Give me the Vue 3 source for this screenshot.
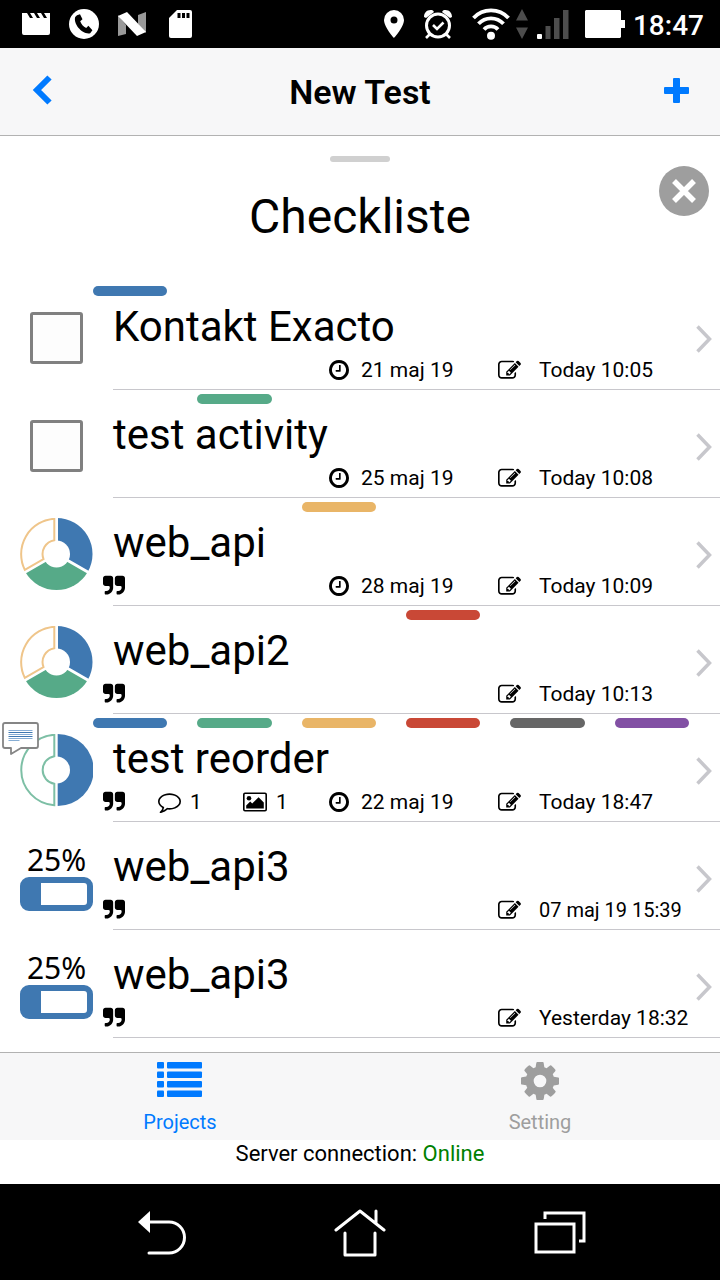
<script setup>
import { ref } from 'vue'

const palette = ['#3f78b1', '#56aa88', '#e9b567', '#c94836', '#666666', '#8250a4']

const items = ref([
  { id: 1, title: 'Kontakt Exacto', status: 'check', tags: [0], due: '21 maj 19', edited: 'Today 10:05' },
  { id: 2, title: 'test activity', status: 'check', tags: [1], due: '25 maj 19', edited: 'Today 10:08' },
  { id: 3, title: 'web_api', status: 'thirds', tags: [2], note: true, due: '28 maj 19', edited: 'Today 10:09' },
  { id: 4, title: 'web_api2', status: 'thirds', tags: [3], note: true, edited: 'Today 10:13' },
  { id: 5, title: 'test reorder', status: 'halves', tags: [0, 1, 2, 3, 4, 5], note: true, comments: 1, images: 1, due: '22 maj 19', edited: 'Today 18:47', unread: true },
  { id: 6, title: 'web_api3', status: 'percent', percent: 25, tags: [], note: true, edited: '07 maj 19 15:39', fullDate: true },
  { id: 7, title: 'web_api3', status: 'percent', percent: 25, tags: [], note: true, edited: 'Yesterday 18:32' }
])
</script>

<template>
  <div class="screen">
    <div class="status">
      <div class="status-left">
        <svg width="28" height="24" viewBox="0 0 28 24"><path fill="#fff" d="M0 1h5l3 5h3L8 1h4l3 5h3l-3-5h4l3 5h3l-3-5h6v20a2 2 0 0 1-2 2H2a2 2 0 0 1-2-2z" /></svg>
        <svg width="30" height="30" viewBox="0 0 30 30"><circle cx="15" cy="15" r="15" fill="#fff" /><path fill="#000" d="M8 6.200l3-1 2.500 5-2.300 2c1 3 3 5.200 6 6.700l2.200-2.100 4 4.500-2.200 3C13.500 26 4 15 6.200 8z" /></svg>
        <svg width="28" height="24" viewBox="0 0 28 24"><path fill="#999" d="M0 3l8 10v9l-8 2zM28 0v21l-8-9V3z" /><path fill="#fff" d="M0 4l9-4 19 20-9 4z" /></svg>
        <svg class="sdcard" width="23" height="28" viewBox="0 0 23 28"><path fill="#fff" d="M8 0h13a2 2 0 0 1 2 2v24a2 2 0 0 1-2 2H2a2 2 0 0 1-2-2V8z" /><path d="M8.500 3h3v5h-3zM13 3h3v5h-3zM17.500 3h3v5h-3z" /></svg>
      </div>
      <div class="status-right">
        <svg class="pin" width="20" height="28" viewBox="0 0 20 28"><path fill="#fff" fill-rule="evenodd" d="M10 0a10 10 0 0 1 10 10c0 7-10 18-10 18S0 17 0 10A10 10 0 0 1 10 0zm0 6.500a3.500 3.500 0 1 0 0 7 3.500 3.500 0 0 0 0-7z" /></svg>
        <svg class="alarm" width="28" height="30" viewBox="0 0 28 30" fill="none" stroke="#fff"><circle cx="14" cy="16.500" r="11.500" stroke-width="3" /><path stroke-width="2.600" d="M9 16l4 4 6.500-6.500M6 25l-4 4M22 25l4 4" /><path fill="#fff" stroke="none" d="M0 8C0 3 4 0 9 1.500L10 3 2 9zM28 8c0-5-4-8-9-6.500L18 3l8 6z" /></svg>
        <svg class="wifi" width="38" height="32" viewBox="0 0 38 32" fill="none" stroke="#fff" stroke-width="3.800"><path d="M1.500 10a24 24 0 0 1 35 0M6.500 15.800a17 17 0 0 1 25 0M12 21.500a9.500 9.500 0 0 1 14 0" /><circle cx="19" cy="27.800" r="4" fill="#fff" stroke="none" /></svg>
        <svg class="traffic" width="12" height="30" viewBox="0 0 12 30"><path fill="#4d4d4d" d="M6 0l6 11.500H0zM6 30L0 18.500h12z" /></svg>
        <svg class="signal" width="32" height="29" viewBox="0 0 32 29"><rect x="0" y="24" width="5" height="5" rx="1" fill="#fff" /><path fill="#4d4d4d" d="M8.500 16h5v13h-5zM17 8h5.500v21H17zM26 0h5.500v29H26z" /></svg>
        <svg width="40" height="28" viewBox="0 0 40 28"><path fill="#fff" d="M1 0h34l1 1v9h4v8h-4v9l-1 1H1l-1-1V1z" /></svg>
        <time class="clock">18:47</time>
      </div>
    </div>

    <header class="navbar">
      <button class="nav-btn" type="button" aria-label="Back">
        <svg width="22" height="30" viewBox="0 0 22 30" fill="none" stroke="#007aff" stroke-width="6"><path d="M18.500 2.500L6 15 18.500 27.500" stroke-linejoin="miter" /></svg>
      </button>
      <h1 class="nav-title">New Test</h1>
      <button class="nav-btn right" type="button" aria-label="Add">
        <svg width="25" height="25" viewBox="0 0 25 25" fill="#007aff"><rect x="9" width="7" height="25" rx="1" /><rect y="9" width="25" height="7" rx="1" /></svg>
      </button>
    </header>

    <main class="sheet">
      <div class="sheet-head">
        <div class="handle"></div>
        <h2 class="sheet-title">Checkliste</h2>
        <button class="close" type="button" aria-label="Close">
          <svg width="50" height="50" viewBox="0 0 50 50"><circle cx="25" cy="25" r="25" fill="#9e9e9e" /><path d="M15 15l20 20M35 15L15 35" stroke="#fff" stroke-width="5.500" /></svg>
        </button>
      </div>

      <ul class="list">
        <li v-for="item in items" :key="item.id" class="row">
          <div class="tags">
            <span v-for="(color, i) in palette" :key="i" class="tag" :style="{ background: item.tags.includes(i) ? color : 'transparent' }"></span>
          </div>

          <div class="badge">
            <input v-if="item.status === 'check'" class="box" type="checkbox" :aria-label="item.title" />
            <svg v-else-if="item.status === 'thirds'" width="73" height="73" viewBox="-36.500 -36 73 73">
              <path fill="#3f78b1" d="M0-36A36 36 0 0 1 31.200 18L0 0z" />
              <path fill="#56aa88" d="M31.200 18A36 36 0 0 1-31.200 18L0 0z" />
              <path d="M0 0V-37M0 0L33 19M0 0L-33 19" stroke="#fff" stroke-width="3" />
              <circle r="13.500" fill="#fff" />
              <path fill="#fff" stroke="#efc58a" stroke-width="2" d="M-2.200-35.200V-13.800A14 14 0 0 0-13 5L-31.700 15.800A35.400 35.400 0 0 1-2.200-35.200z" />
            </svg>
            <svg v-else-if="item.status === 'halves'" width="73" height="73" viewBox="-36.500 -36 73 73">
              <path fill="#3f78b1" d="M1.200-36A36 36 0 0 1 1.200 36z" />
              <circle r="13.500" fill="#fff" />
              <path fill="#fff" stroke="#7dbfa5" stroke-width="2" d="M-2.200-35.200V-13.800A14 14 0 0 0-2.200 13.800V35.200A35.270 35.270 0 0 1-2.200-35.200z" />
            </svg>
            <div v-else class="percent">
              <span class="percent-text">{{ item.percent }}%</span>
              <span class="gauge"><span class="gauge-fill" :style="{ width: item.percent + '%' }"></span></span>
            </div>
            <svg v-if="item.unread" class="bubble" width="37" height="34" viewBox="0 0 37 34"><path fill="#fff" stroke="#858585" stroke-width="1.800" stroke-linejoin="round" d="M3 1h31q2 0 2 2v21q0 2-2 2H19L9 32v-6H3q-2 0-2-2V3q0-2 2-2z" /><path d="M6.500 8.500h24M6.500 12.500h24M6.500 16.500h24M6.500 18.500h11" stroke="#86add4" stroke-width="1" /><path d="M6.500 10.500h24M6.500 14.500h24" stroke="#3f78b1" stroke-width="1" /></svg>
          </div>

          <a class="title" href="#">{{ item.title }}</a>
          <svg class="chevron" width="16" height="28" viewBox="0 0 16 28" fill="none" stroke="#c7c7cc" stroke-width="3.500"><path d="M1.500 1.500L13.500 14 1.500 26.500" /></svg>

          <div class="meta">
            <span class="cell">
              <svg v-if="item.note" width="22" height="22" viewBox="64 64 1664 1664"><path d="M832 320v704q0 104-40.500 198.500t-109.500 163.500-163.500 109.500-198.500 40.500h-64q-26 0-45-19t-19-45v-128q0-26 19-45t45-19h64q106 0 181-75t75-181v-32q0-40-28-68t-68-28h-224q-80 0-136-56t-56-136v-384q0-80 56-136t136-56h384q80 0 136 56t56 136zm896 0v704q0 104-40.500 198.500t-109.500 163.500-163.500 109.500-198.500 40.500h-64q-26 0-45-19t-19-45v-128q0-26 19-45t45-19h64q106 0 181-75t75-181v-32q0-40-28-68t-68-28h-224q-80 0-136-56t-56-136v-384q0-80 56-136t136-56h384q80 0 136 56t56 136z" /></svg>
            </span>
            <span class="cell">
              <template v-if="item.comments">
                <svg width="23" height="23" viewBox="0 80 1792 1792"><path d="M896 384q-204 0-381.500 69.500t-282 187.500-104.500 255q0 112 71.500 213.500t201.500 175.500l87 50-27 96q-24 91-70 172 152-63 275-171l43-38 57 6q69 8 130 8 204 0 381.500-69.500t282-187.500 104.500-255-104.500-255-282-187.500-381.500-69.500zm896 512q0 174-120 321.500t-326 233-450 85.500q-70 0-145-8-198 175-460 242-49 14-114 22h-5q-15 0-27-10.500t-16-27.500v-1q-3-4-.5-12t2-10 4.500-9.500l6-9 7-8.500 8-9q7-8 31-34.500t34.500-38 31-39.500 32.500-51 27-59 26-76q-157-89-247.500-220t-90.500-281q0-130 71-248.500t191-204.500 286-136.500 348-50.500 348 50.500 286 136.500 191 204.500 71 248.500z" /></svg>
                <span>{{ item.comments }}</span>
              </template>
            </span>
            <span class="cell">
              <template v-if="item.images">
                <svg width="24" height="20" viewBox="0 0 24 20"><rect x=".8" y="1.300" width="22.400" height="17.400" rx="1.200" fill="none" stroke="#000" stroke-width="1.600" /><circle cx="6" cy="6.200" r="2.300" /><path d="M3.200 16.500v-3l4-4 2 2 6.400-6.300 5.200 5.200v6.100z" /></svg>
                <span>{{ item.images }}</span>
              </template>
            </span>
            <span class="cell due">
              <template v-if="item.due">
                <svg width="20" height="20" viewBox="128 128 1536 1536"><path d="M1024 544v448q0 14-9 23t-23 9h-320q-14 0-23-9t-9-23v-64q0-14 9-23t23-9h224v-352q0-14 9-23t23-9h64q14 0 23 9t9 23zm416 352q0-148-73-273t-198-198-273-73-273 73-198 198-73 273 73 273 198 198 273 73 273-73 198-198 73-273zm224 0q0 209-103 385.500t-279.500 279.500-385.500 103-385.500-103-279.500-279.500-103-385.500 103-385.500 279.500-279.500 385.500-103 385.500 103 279.500 279.500 103 385.500z" /></svg>
                <span>{{ item.due }}</span>
              </template>
            </span>
            <span class="cell edited" :class="{ 'full-date': item.fullDate }">
              <svg width="23" height="23" viewBox="0 0 1792 1792"><path d="M888 1184l116-116-152-152-116 116v56h96v96h56zm440-720q-16-16-33 1l-350 350q-17 17-1 33t33-1l350-350q17-17 1-33zm80 594v190q0 119-84.500 203.500t-203.500 84.500h-832q-119 0-203.500-84.500t-84.500-203.500v-832q0-119 84.500-203.500t203.500-84.500h832q63 0 117 25 15 7 18 23 3 17-9 29l-49 49q-14 14-32 8-23-6-45-6h-832q-66 0-113 47t-47 113v832q0 66 47 113t113 47h832q66 0 113-47t47-113v-126q0-13 9-22l64-64q15-15 35-7t20 29zm-96-738l288 288-672 672h-288v-288zm444 132l-92 92-288-288 92-92q28-28 68-28t68 28l152 152q28 28 28 68t-28 68z" /></svg>
              <span>{{ item.edited }}</span>
            </span>
          </div>
          <div class="rule"></div>
        </li>
      </ul>
    </main>

    <nav class="tabbar">
      <a class="tab active" href="#">
        <svg width="46" height="38" viewBox="0 0 46 38" fill="currentColor"><rect y="0" width="7" height="6.500" rx="1" /><rect x="10" y="0" width="35" height="6.500" rx="1" /><rect y="9.500" width="7" height="6.500" rx="1" /><rect x="10" y="9.500" width="35" height="6.500" rx="1" /><rect y="19" width="7" height="6.500" rx="1" /><rect x="10" y="19" width="35" height="6.500" rx="1" /><rect y="28.500" width="7" height="6.500" rx="1" /><rect x="10" y="28.500" width="35" height="6.500" rx="1" /></svg>
        <span>Projects</span>
      </a>
      <a class="tab" href="#">
        <svg width="38" height="38" viewBox="128 128 1536 1536" fill="currentColor"><path d="M1152 896q0-106-75-181t-181-75-181 75-75 181 75 181 181 75 181-75 75-181zm512-109v222q0 12-8 23t-20 13l-185 28q-19 54-39 91 35 50 107 138 10 12 10 25t-9 23q-27 37-99 108t-94 71q-12 0-26-9l-138-108q-44 23-91 38-16 136-29 186-7 28-36 28h-222q-14 0-24.500-8.500t-11.500-21.500l-28-184q-49-16-90-37l-141 107q-10 9-25 9-14 0-25-11-126-114-165-168-7-10-7-23 0-12 8-23 15-21 51-66.500t54-70.500q-27-50-41-99l-183-27q-13-2-21-12.500t-8-23.500v-222q0-12 8-23t19-13l186-28q14-46 39-92-40-57-107-138-10-12-10-24 0-10 9-23 26-36 98.500-107.500t94.500-71.500q13 0 26 10l138 107q44-23 91-38 16-136 29-186 7-28 36-28h222q14 0 24.500 8.500t11.500 21.500l28 184q49 16 90 37l142-107q9-9 24-9 13 0 25 10 129 119 165 170 7 8 7 22 0 12-8 23-15 21-51 66.500t-54 70.500q26 50 41 98l183 28q13 2 21 12.500t8 23.500z" /></svg>
        <span>Setting</span>
      </a>
    </nav>

    <footer class="server">Server connection: <span class="online">Online</span></footer>

    <div class="softkeys">
      <button type="button" aria-label="System back"><svg width="48" height="44" viewBox="0 0 48 44" fill="none" stroke="#fff" stroke-width="3" stroke-linecap="round"><path d="M12 11h19a15.500 15.500 0 0 1 0 31H11" /><path d="M0 11L12 0v22z" fill="#fff" stroke="none" /></svg></button>
      <button type="button" aria-label="Home"><svg width="52" height="48" viewBox="0 0 52 48" fill="none" stroke="#fff" stroke-width="3" stroke-linecap="round" stroke-linejoin="round"><path d="M2 21L26 2l24 19M42 2v12M11 24v22h30V24" /></svg></button>
      <button type="button" aria-label="Recent apps"><svg width="52" height="44" viewBox="0 0 52 44" fill="none" stroke="#fff" stroke-width="3"><rect x="2" y="13" width="38" height="28" /><path d="M11 8V2h39v28h-5" /></svg></button>
    </div>
  </div>
</template>

<style>
body {
  background: #fff;
}
</style>

<style scoped>
.screen {
  display: flex;
  flex-direction: column;
  min-height: 100vh;
  background: #fff;
  color: #000;
  font-family: Roboto, "Liberation Sans", sans-serif;
}
.screen * {
  box-sizing: border-box;
}
svg {
  display: block;
  flex: none;
}
button {
  padding: 0;
  border: 0;
  background: none;
  cursor: pointer;
}
a {
  color: inherit;
  text-decoration: none;
}
.status {
  display: flex;
  align-items: center;
  justify-content: space-between;
  height: 48px;
  padding: 0 16px 0 22px;
  background: #000;
}
.status-left {
  display: flex;
  align-items: center;
  gap: 19px;
}
.sdcard {
  margin-left: 4px;
}
.status-right {
  display: flex;
  align-items: center;
}
.pin {
  margin-right: 20px;
}
.alarm {
  margin-right: 20px;
}
.wifi {
  margin-right: 6px;
}
.traffic {
  margin-right: 9px;
}
.signal {
  margin-right: 16px;
}
.clock {
  margin-left: 8px;
  padding-top: 4px;
  color: #fff;
  font-size: 28px;
  font-weight: 500;
  line-height: 32px;
}
.navbar {
  display: grid;
  grid-template-columns: 100px 1fr 100px;
  align-items: center;
  height: 88px;
  padding: 0 31px;
  border-bottom: 1px solid #b2b2b2;
  background: #f7f7f8;
}
.nav-btn {
  display: flex;
  height: 44px;
  align-items: center;
  padding-bottom: 3px;
}
.nav-btn.right {
  justify-content: flex-end;
}
.nav-title {
  margin: 0;
  font-size: 34px;
  font-weight: 600;
  line-height: 44px;
  text-align: center;
}
.sheet {
  flex: 1;
}
.sheet-head {
  position: relative;
  display: flex;
  flex-direction: column;
  align-items: center;
  height: 146px;
  padding-top: 20px;
}
.handle {
  width: 60px;
  height: 6px;
  border-radius: 3px;
  background: #d0d0d0;
}
.sheet-title {
  margin: 25px 0 0;
  font-size: 48px;
  font-weight: 400;
  line-height: 60px;
}
.close {
  position: absolute;
  top: 30px;
  right: 11px;
}
.list {
  margin: 0;
  padding: 0;
  list-style: none;
}
.row {
  display: grid;
  grid-template-columns: 103px 1fr 24px;
  grid-template-rows: 14px 60px 33px 1px;
}
.tags {
  grid-column: 1 / -1;
  display: grid;
  grid-template-columns: repeat(6, 1fr);
  gap: 30px;
  padding: 4px 31px 0 93px;
}
.tag {
  height: 10px;
  border-radius: 5px;
}
.badge {
  position: relative;
  grid-column: 1;
  grid-row: 2 / 4;
  display: flex;
  flex-direction: column;
  align-items: center;
  width: 73px;
  height: 73px;
  margin: 6px 0 0 20px;
}
.box {
  appearance: none;
  width: 53px;
  height: 52px;
  margin: 10px 0 0;
  border: 3px solid #808080;
  border-radius: 3px;
  background: #fdfdfd;
}
.bubble {
  position: absolute;
  top: -12px;
  left: -18px;
}
.percent {
  width: 100%;
  text-align: center;
}
.percent-text {
  display: block;
  height: 35px;
  font-family: "Noto Sans", sans-serif;
  font-size: 30px;
  line-height: 35px;
}
.gauge {
  display: block;
  height: 34px;
  border: 6px solid #3f78b1;
  border-radius: 9px;
  background: #fff;
}
.gauge-fill {
  display: block;
  height: 100%;
  background: #3f78b1;
}
.title {
  grid-column: 2;
  grid-row: 2;
  padding-left: 10px;
  font-size: 42px;
  line-height: 62px;
}
.chevron {
  grid-column: 3;
  grid-row: 2 / 4;
  margin-top: 29px;
}
.meta {
  grid-column: 2 / 4;
  grid-row: 3;
  display: grid;
  grid-template-columns: 55px 85px 86px 169px 1fr;
  height: 28px;
  font-size: 21px;
  line-height: 28px;
}
.cell {
  display: flex;
  align-items: center;
  gap: 9px;
  white-space: nowrap;
}
.due {
  gap: 12px;
}
.edited {
  gap: 18px;
}
.full-date {
  font-size: 20px;
}
.rule {
  grid-column: 1 / -1;
  margin-left: 113px;
  background: #c8c7cc;
}
.tabbar {
  display: grid;
  grid-template-columns: 1fr 1fr;
  height: 88px;
  border-top: 1px solid #b2b2b2;
  background: #f7f7f8;
}
.tab {
  display: flex;
  flex-direction: column;
  align-items: center;
  gap: 10px;
  padding-top: 9px;
  color: #9e9e9e;
  font-size: 20px;
  line-height: 24px;
}
.tab.active {
  color: #007aff;
}
.server {
  height: 44px;
  font-size: 22px;
  line-height: 28px;
  text-align: center;
}
.online {
  color: #008000;
}
.softkeys {
  display: flex;
  align-items: center;
  justify-content: space-around;
  height: 96px;
  padding: 2px 60px 0 64px;
  background: #000;
}
</style>
